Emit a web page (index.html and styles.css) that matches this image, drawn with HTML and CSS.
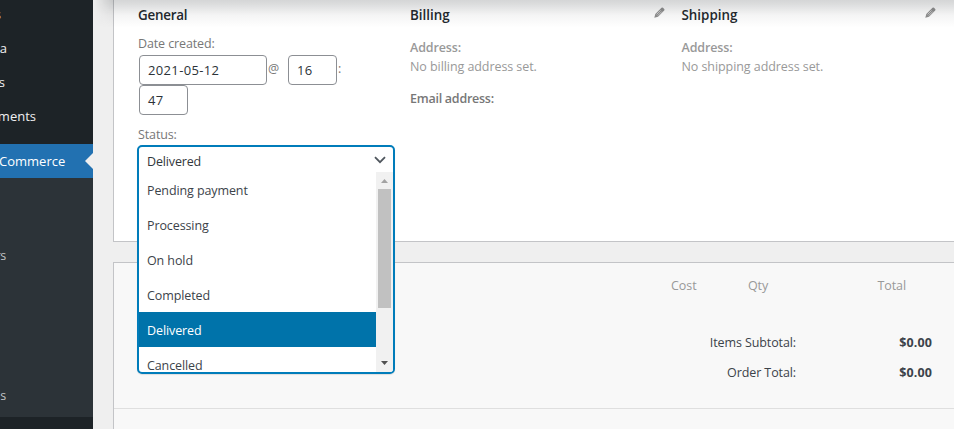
FILE: index.html
```html
<!DOCTYPE html>
<html lang="en">
<head>
<meta charset="utf-8">
<title>Edit order</title>
<link rel="stylesheet" href="styles.css">
</head>
<body>
<div class="app">
  <nav class="sidebar">
    <ul class="menu">
      <li class="edge-1"><span>s</span></li>
      <li class="edge-7"><span>ia</span></li>
      <li class="edge-5"><span>s</span></li>
      <li class="edge-36"><span>ments</span></li>
    </ul>
    <div class="current"><span>Commerce</span></div>
    <ul class="submenu">
      <li><span>rs</span></li>
      <li><span>s</span></li>
    </ul>
  </nav>
  <main class="content">
    <div class="top-shadow"></div>
    <section class="panel order-data">
      <div class="column">
        <h3><span class="general">General</span></h3>
        <div class="label date-label"><span>Date created:</span></div>
        <div class="date-row"><div class="input date">2021-05-12</div><span class="at">@</span><div class="input time">16</div><span class="colon">:</span></div>
        <div class="input time minute">47</div>
        <div class="label status-label"><span>Status:</span></div>
        <div class="select">
          <div class="select-head"><span>Delivered</span>
            <svg width="12" height="8" viewBox="0 0 12 8"><path d="M1 1.2 L6 6.2 L11 1.2" fill="none" stroke="#50575e" stroke-width="1.8"/></svg>
          </div>
          <div class="select-body">
            <ul class="options">
              <li>Pending payment</li>
              <li>Processing</li>
              <li>On hold</li>
              <li>Completed</li>
              <li class="active">Delivered</li>
              <li>Cancelled</li>
            </ul>
            <div class="scrollbar">
              <svg width="17" height="17" viewBox="0 0 17 17"><path d="M5 11 L8.5 7 L12 11Z" fill="#a3a3a3"/></svg>
              <div class="thumb"></div>
              <svg class="down" width="17" height="17" viewBox="0 0 17 17"><path d="M5 6 L8.5 10 L12 6Z" fill="#505050"/></svg>
            </div>
          </div>
        </div>
      </div>
      <div class="column">
        <h3><span>Billing</span>
          <svg class="pencil" width="11" height="11" viewBox="0 0 11 11"><path d="M.3 10.7 L1.3 7 L7.5 .8 Q8.2 .1 9 .8 L10.2 2 Q10.9 2.7 10.2 3.5 L4 9.7Z" fill="#909090"/><path d="M2.6 7.4 L6.6 3.4 M3.8 8.5 L7.8 4.5" stroke="#e6e6e6" stroke-width=".7"/></svg>
        </h3>
        <div class="address"><b>Address:</b><span>No billing address set.</span></div>
        <b class="email">Email address:</b>
      </div>
      <div class="column">
        <h3><span>Shipping</span>
          <svg class="pencil" width="11" height="11" viewBox="0 0 11 11"><path d="M.3 10.7 L1.3 7 L7.5 .8 Q8.2 .1 9 .8 L10.2 2 Q10.9 2.7 10.2 3.5 L4 9.7Z" fill="#909090"/><path d="M2.6 7.4 L6.6 3.4 M3.8 8.5 L7.8 4.5" stroke="#e6e6e6" stroke-width=".7"/></svg>
        </h3>
        <div class="address"><b>Address:</b><span>No shipping address set.</span></div>
      </div>
    </section>
    <section class="panel items">
      <div class="items-head"><span class="cost">Cost</span><span class="qty">Qty</span><span class="total">Total</span></div>
      <div class="totals">
        <div class="row"><span>Items Subtotal:</span><b>$0.00</b></div>
        <div class="row"><span>Order Total:</span><b>$0.00</b></div>
      </div>
      <div class="items-foot"></div>
    </section>
  </main>
</div>
</body>
</html>
```
FILE: styles.css
```css
* { box-sizing: border-box; }
body {
  margin: 0;
  overflow: hidden;
  background: #efefef;
  color: #3c434a;
  font: 12.5px/19px "Open Sans", "Noto Sans", sans-serif;
  letter-spacing: -.07px;
}
ul { list-style: none; margin: 0; padding: 0; }
b { font-weight: 600; letter-spacing: -.13px; }
.app { display: flex; width: 954px; height: 429px; overflow: hidden; }

.sidebar { width: 93px; flex: none; background: #1d2327; overflow: hidden; color: #f0f0f1; font-size: 13px; letter-spacing: 0; }
.menu { height: 144px; }
.menu li { display: flex; justify-content: flex-end; height: 34px; line-height: 34px; }
.menu li:first-child { height: 31px; line-height: 28px; }
.edge-1 { width: 1px; }
.edge-5 { width: 5px; }
.edge-7 { width: 7px; }
.edge-36 { width: 36px; }
.current { display: flex; align-items: center; justify-content: space-between; height: 34px; background: #2271b1; color: #fff; }
.current span { margin-left: -1px; }
.current::after { content: ""; border: 8px solid transparent; border-right-color: #efefef; border-left: 0; }
.submenu { height: 239px; padding-top: 61px; background: #2c3338; color: #c3c4c7; }
.submenu li { display: flex; justify-content: flex-end; width: 6px; height: 140px; line-height: 34px; font-size: 12.5px; letter-spacing: -.3px; }

.content { position: relative; flex: 1; padding-left: 20px; min-width: 0; }
.top-shadow {
  position: absolute; inset: 0 0 auto 0; height: 27px; z-index: 2; pointer-events: none;
  background: linear-gradient(rgba(29,35,39,.19), rgba(29,35,39,.15) 18%, rgba(29,35,39,.05) 55%, transparent);
  -webkit-mask-image: linear-gradient(90deg, transparent, #000 20px);
  mask-image: linear-gradient(90deg, transparent, #000 20px);
}
.panel { border: 1px solid #c3c4c7; border-right: 0; width: 841px; }
.order-data { display: flex; height: 242px; padding-left: 24px; border-top: 0; background: #fff; }
.column { position: relative; width: 271.5px; flex: none; }
.column + .column { left: .5px; }
h3 { display: flex; justify-content: space-between; height: 34px; margin: 0; padding-top: 6px; font-size: 13.4px; font-weight: 600; letter-spacing: 0; color: #23282d; }
.general { letter-spacing: -.25px; }
.pencil { margin: 1px 17px 0 0; }
.label { color: #777; height: 19px; letter-spacing: -.12px; }
.date-row { display: flex; height: 31px; padding: 2px 0 0 1px; color: #777; }
.input { height: 30px; border: 1px solid #8c8f94; border-radius: 4px; padding: 0 8px; line-height: 29px; background: #fff; color: #2c3338; font-size: 13px; letter-spacing: .35px; }
.date { width: 128px; }
.time { width: 49px; }
.at { width: 21px; padding-left: 1px; line-height: 27px; }
.colon { padding-left: 1px; line-height: 27px; }
.minute { margin: 1px 0 0 1px; }
.status-label { margin-top: 10px; }
.select { position: absolute; left: -1px; top: 145px; width: 258px; height: 229px; border: 2px solid #007cba; border-radius: 5px; background: #fff; overflow: hidden; z-index: 3; box-shadow: 0 1px 1px rgba(0,0,0,.1); }
.select-head { display: flex; align-items: center; justify-content: space-between; height: 25px; padding: 3px 7px 0 8px; color: #32373c; letter-spacing: -.15px; }
.select-head svg { margin-top: -2px; }
.select-body { display: flex; height: 200px; letter-spacing: -.1px; }
.options { flex: 1; overflow: hidden; }
.options li { height: 35px; line-height: 38px; padding-left: 8px; }
.options .active { background: #0073aa; color: #fff; }
.scrollbar { display: flex; flex-direction: column; width: 17px; background: #f1f1f1; }
.scrollbar svg { display: block; flex: none; }
.thumb { height: 119px; margin: 0 2px; background: #c1c1c1; }
.down { margin-top: auto; }
.address { display: flex; flex-direction: column; margin-top: 4px; color: #999; }
.email { display: block; margin-top: 13px; color: #777; letter-spacing: -.25px; }

.items { height: 200px; margin-top: 20px; background: #f8f8f8; }
.items-head { display: flex; height: 64px; padding: 13px 48px 0 557px; color: #999; }
.cost { width: 77px; }
.qty { width: 129.5px; }
.totals { height: 81px; }
.row { display: flex; justify-content: flex-end; height: 30px; padding: 6px 22px 0 0; letter-spacing: -.1px; }
.row b { width: 136px; text-align: right; font-weight: 700; letter-spacing: .1px; }
.items-foot { border-top: 1px solid #dfdfdf; }
```
